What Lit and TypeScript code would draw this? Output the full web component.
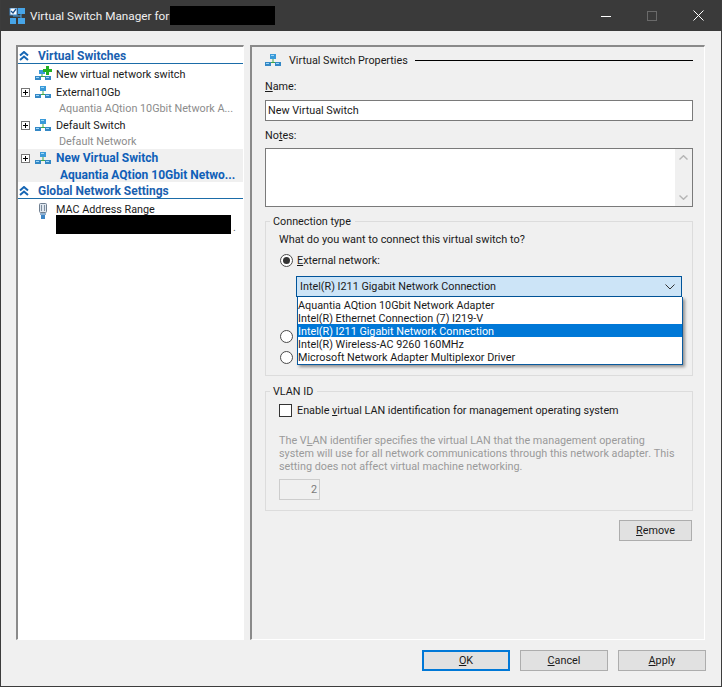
import { LitElement, html, css, svg } from "lit";
import { customElement } from "lit/decorators.js";

const net = svg`<svg class="ico" width="16" height="12" viewBox="0 0 16 12">
<path d="M8 4V8M3 9V8.5H13V9" fill="none" stroke="#3fa64a" stroke-width="1"/>
<rect x="5" y="0" width="6" height="5" fill="#3a9ad9"/><rect x="6" y="1" width="3" height="1" fill="#9fd8f7"/>
<rect x="0" y="8" width="6" height="4" fill="#3488c6"/><rect x="1" y="9" width="3" height="1" fill="#9fd8f7"/>
<rect x="10" y="8" width="6" height="4" fill="#3488c6"/><rect x="11" y="9" width="3" height="1" fill="#9fd8f7"/>
</svg>`;
const netAdd = svg`<svg class="ico" width="16" height="12" viewBox="0 0 16 12" overflow="visible">
<path d="M7 4V8M3 9V8.5H13V9" fill="none" stroke="#3fa64a" stroke-width="1"/>
<rect x="4" y="2" width="6" height="4" fill="#3a9ad9"/>
<rect x="0" y="8" width="6" height="4" fill="#3488c6"/><rect x="1" y="9" width="3" height="1" fill="#9fd8f7"/>
<rect x="10" y="8" width="6" height="4" fill="#3488c6"/><rect x="11" y="9" width="3" height="1" fill="#9fd8f7"/>
<path d="M11 -2H14V1H17V4H14V7H11V4H8V1H11Z" fill="#22b022"/>
</svg>`;
const chev = svg`<svg width="10" height="10" viewBox="0 0 10 10"><path d="M1 4.5L5 1L9 4.5M1 9L5 5.5L9 9" fill="none" stroke="#1666b4" stroke-width="2"/></svg>`;
const plus = svg`<svg class="plus" width="9" height="9" viewBox="0 0 9 9"><rect x=".5" y=".5" width="8" height="8" fill="#fff" stroke="#777"/><path d="M2 4.5H7M4.5 2V7" stroke="#000"/></svg>`;
const mac = svg`<svg class="ico" width="10" height="16" viewBox="0 0 10 16"><rect x="1.5" y=".5" width="7" height="9" rx="1" fill="#dfe6ee" stroke="#6f7f90"/><path d="M3.5 2V8M6.5 2V8" stroke="#7f8f9f"/><rect x="2" y="10" width="6" height="2" fill="#8fb0d0"/><rect x="3" y="12" width="4" height="4" fill="#3d85c6"/></svg>`;

@customElement("app-root")
export class AppRoot extends LitElement {
  static styles = css`
    :host { display: block; width: 722px; height: 687px; font-family: Roboto, "Open Sans", sans-serif; font-size: 10.8px; color: #1a1a1a; }
    * { box-sizing: border-box; }
    u { text-underline-offset: 1px; }
    .win { width: 722px; height: 687px; background: #f0f0f0; border: 1px solid #3c3c3c; border-top: 0; display: flex; flex-direction: column; }
    .title { height: 31px; flex: none; background: #3a3a3a; color: #f0f0f0; display: flex; align-items: center; padding: 0 0 0 8px; font-size: 11.75px; }
    .title .appico { margin-right: 5px; flex: none; display: block; }
    .redact { background: #000; height: 19px; width: 105px; }
    .title .ttl { width: 140px; white-space: nowrap; }
    .title .spacer { flex: 1; }
    .ctl { width: 46px; height: 31px; display: flex; align-items: center; justify-content: center; flex: none; }
    .main { flex: 1; display: flex; padding: 14px 0 0 15px; gap: 6px; height: 595px; }
    .left { width: 228px; height: 595px; flex: none; background: #fff; border-top: 2px solid #8a8a8a; border-left: 2px solid #8a8a8a; border-right: 1px solid #fff; border-bottom: 1px solid #fff; display: flex; flex-direction: column; }
    .hdr { height: 17px; flex: none; border-bottom: 1px solid #1b6ca8; display: flex; align-items: center; color: #1a5fb0; font-weight: 700; font-size: 12px; padding: 2px 0 0 1px; gap: 6px; }
    .hdr b { margin-left: 3px; font-weight: 700; }
    .row { display: flex; align-items: center; height: 18px; padding-left: 3px; }
    .row.top { height: 19px; padding-top: 1px; }
    .exp { width: 14px; flex: none; display: flex; }
    .ico { flex: none; display: block; margin-right: 5px; }
    .node { height: 33px; flex: none; }
    .sub { height: 15px; padding-left: 41px; color: #8c8c8c; display: flex; align-items: center; white-space: nowrap; }
    .sel { background: #f0f0f0; color: #0f5fb8; font-weight: 700; font-size: 12px; }
    .sel .sub { color: #0f5fb8; padding-left: 42px; }
    .row.macrow { padding: 0 0 0 20px; height: 20px; }
    .macrow .ico { margin-right: 8px; margin-top: 4px; }
    .macblack { display: flex; align-items: flex-end; margin: -4px 0 0 38px; gap: 2px; color: #666; height: 19px; }
    .macblack i { width: 175px; height: 19px; background: #000; display: block; }
    .right { width: 455px; flex: none; height: 595px; border-top: 2px solid #8a8a8a; border-left: 2px solid #8a8a8a; border-right: 1px solid #fff; border-bottom: 1px solid #fff; padding: 6px 11px 0 13px; display: flex; flex-direction: column; }
    .phead { display: flex; align-items: center; height: 14px; }
    .phead .ico { margin-right: 8px; }
    .phead .line { flex: 1; height: 1px; background: #000; margin-left: 7px; }
    .lab { height: 16px; display: flex; align-items: center; margin-bottom: 5px; }
    .lab.name { margin-top: 11px; margin-bottom: 6px; }
    .lab.notes-l { margin-top: 6px; }
    .input { height: 21px; background: #fff; border: 1px solid #7a7a7a; display: flex; align-items: center; padding-left: 2px; }
    .notes { height: 59px; background: #fff; border: 1px solid #7a7a7a; display: flex; justify-content: flex-end; }
    .scroll { width: 17px; background: #f0f0f0; display: flex; flex-direction: column; justify-content: space-between; align-items: center; padding: 6px 0; }
    .group { border: 1px solid #dcdcdc; position: relative; }
    .legend { position: absolute; top: -9px; left: 4px; background: #f0f0f0; padding: 0 4px 0 3px; height: 16px; display: flex; align-items: center; }
    .ct { height: 155px; margin-top: 14px; padding: 9px 0 0 13px; }
    .q { height: 16px; display: flex; align-items: center; font-size: 10.9px; }
    .radio { width: 13px; height: 13px; border-radius: 50%; border: 1px solid #4a4a4a; background: #fff; flex: none; display: flex; align-items: center; justify-content: center; margin-left: 1px; }
    .radio i { width: 7px; height: 7px; border-radius: 50%; background: #333; display: block; }
    .rline { display: flex; align-items: center; gap: 4px; height: 16px; margin-top: 5px; }
    .combo { margin: 8px 10px 0 17px; height: 21px; background: #cce4f7; border: 1px solid #00549a; display: flex; align-items: center; justify-content: space-between; padding: 0 6px 0 3px; }
    .list { position: absolute; left: 31px; top: 75px; width: 386px; height: 68px; background: #fff; border: 1px solid #0a5a9e; border-top: 0; box-shadow: 2px 2px 3px rgba(0,0,0,.4); display: flex; flex-direction: column; padding-top: 1px; z-index: 2; }
    .item { height: 13px; line-height: 15px; padding-left: 0; white-space: nowrap; flex: none; }
    .item.on { background: #0078d7; color: #fff; }
    .r2 { display: flex; flex-direction: column; gap: 8px; margin-top: 33px; }
    .vlan { height: 120px; margin-top: 15px; padding: 11px 0 0 13px; }
    .chk { display: flex; align-items: center; gap: 5px; height: 14px; }
    .box { width: 13px; height: 13px; border: 1px solid #333; background: #fff; flex: none; }
    .desc { color: #9a9a9a; line-height: 13px; margin-top: 17px; white-space: pre; font-kerning: none; }
    .num { width: 41px; height: 21px; margin-top: 6px; border: 1px solid #cdcdcd; color: #7a7a7a; display: flex; align-items: center; justify-content: flex-end; padding-right: 2px; }
    .rem { display: flex; justify-content: flex-end; margin-top: 9px; padding-right: 1px; }
    .btn { height: 21px; background: #e1e1e1; border: 1px solid #adadad; display: flex; align-items: center; justify-content: center; }
    .btn.r { width: 73px; }
    .foot { height: 46px; flex: none; display: flex; justify-content: flex-end; gap: 10px; padding: 10px 15px 0 0; }
    .foot .btn { width: 88px; }
    .btn.def { border: 2px solid #0078d7; }
  `;
  render() {
    return html`<div class="win">
      <div class="title">
        <svg class="appico" width="16" height="16" viewBox="0 0 16 16">
          <rect x="1" y="0" width="7" height="7" fill="#fff" stroke="#3d85c6"/><path d="M2 3L4 5L7 1" fill="none" stroke="#1a4f8a" stroke-width="1.3"/>
          <rect x="9" y="0" width="7" height="6" fill="#47a5e8"/><rect x="1" y="10" width="6" height="6" fill="#47a5e8"/><rect x="9" y="10" width="7" height="6" fill="#47a5e8"/>
          <path d="M12 6V10M4 8H12" stroke="#47a5e8"/>
        </svg>
        <span class="ttl">Virtual Switch Manager for</span><div class="redact"></div>
        <div class="spacer"></div>
        <div class="ctl"><svg width="10" height="10" viewBox="0 0 10 10"><path d="M0 5.5H10" stroke="#fff"/></svg></div>
        <div class="ctl"><svg width="10" height="10" viewBox="0 0 10 10"><rect x=".5" y=".5" width="9" height="9" fill="none" stroke="#6a6a6a"/></svg></div>
        <div class="ctl"><svg width="11" height="11" viewBox="0 0 11 11"><path d="M.5 .5L10.5 10.5M10.5 .5L.5 10.5" stroke="#fff"/></svg></div>
      </div>
      <div class="main">
        <div class="left">
          <div class="hdr">${chev}<b>Virtual Switches</b></div>
          <div class="row top"><span class="exp"></span>${netAdd}<span>New virtual network switch</span></div>
          <div class="node">
            <div class="row"><span class="exp">${plus}</span>${net}<span>External10Gb</span></div>
            <div class="sub">Aquantia AQtion 10Gbit Network A...</div>
          </div>
          <div class="node">
            <div class="row"><span class="exp">${plus}</span>${net}<span>Default Switch</span></div>
            <div class="sub">Default Network</div>
          </div>
          <div class="node sel">
            <div class="row"><span class="exp">${plus}</span>${net}<span>New Virtual Switch</span></div>
            <div class="sub">Aquantia AQtion 10Gbit Netwo...</div>
          </div>
          <div class="hdr">${chev}<b>Global Network Settings</b></div>
          <div class="row macrow">${mac}<span>MAC Address Range</span></div>
          <div class="macblack"><i></i><span>.</span></div>
        </div>
        <div class="right">
          <div class="phead">${net}<span>Virtual Switch Properties</span><div class="line"></div></div>
          <div class="lab name"><span><u>N</u>ame:</span></div>
          <div class="input">New Virtual Switch</div>
          <div class="lab notes-l"><span>No<u>t</u>es:</span></div>
          <div class="notes"><div class="scroll">
            <svg width="9" height="5" viewBox="0 0 9 5"><path d="M.5 4.5L4.5 .7L8.5 4.5" fill="none" stroke="#b5b5b5" stroke-width="1.4"/></svg>
            <svg width="9" height="5" viewBox="0 0 9 5"><path d="M.5 .5L4.5 4.3L8.5 .5" fill="none" stroke="#b5b5b5" stroke-width="1.4"/></svg>
          </div></div>
          <div class="group ct">
            <div class="legend">Connection type</div>
            <div class="q">What do you want to connect this virtual switch to?</div>
            <div class="rline"><div class="radio"><i></i></div><span><u>E</u>xternal network:</span></div>
            <div class="combo"><span>Intel(R) I211 Gigabit Network Connection</span>
              <svg width="10" height="6" viewBox="0 0 10 6"><path d="M.5 .5L5 5L9.5 .5" fill="none" stroke="#333"/></svg></div>
            <div class="list">
              <div class="item">Aquantia AQtion 10Gbit Network Adapter</div>
              <div class="item">Intel(R) Ethernet Connection (7) I219-V</div>
              <div class="item on">Intel(R) I211 Gigabit Network Connection</div>
              <div class="item">Intel(R) Wireless-AC 9260 160MHz</div>
              <div class="item">Microsoft Network Adapter Multiplexor Driver</div>
            </div>
            <div class="r2"><div class="radio"></div><div class="radio"></div></div>
          </div>
          <div class="group vlan">
            <div class="legend">VLAN ID</div>
            <div class="chk"><div class="box"></div><span>Enable <u>v</u>irtual LAN identification for management operating system</span></div>
            <div class="desc">The V<u>L</u>AN identifier specifies the virtual LAN that the management operating
system will use for all network communications through this network adapter. This
setting does not affect virtual machine networking.</div>
            <div class="num">2</div>
          </div>
          <div class="rem"><div class="btn r"><span><u>R</u>emove</span></div></div>
        </div>
      </div>
      <div class="foot">
        <div class="btn def"><span><u>O</u>K</span></div>
        <div class="btn"><span><u>C</u>ancel</span></div>
        <div class="btn"><span><u>A</u>pply</span></div>
      </div>
    </div>`;
  }
}
